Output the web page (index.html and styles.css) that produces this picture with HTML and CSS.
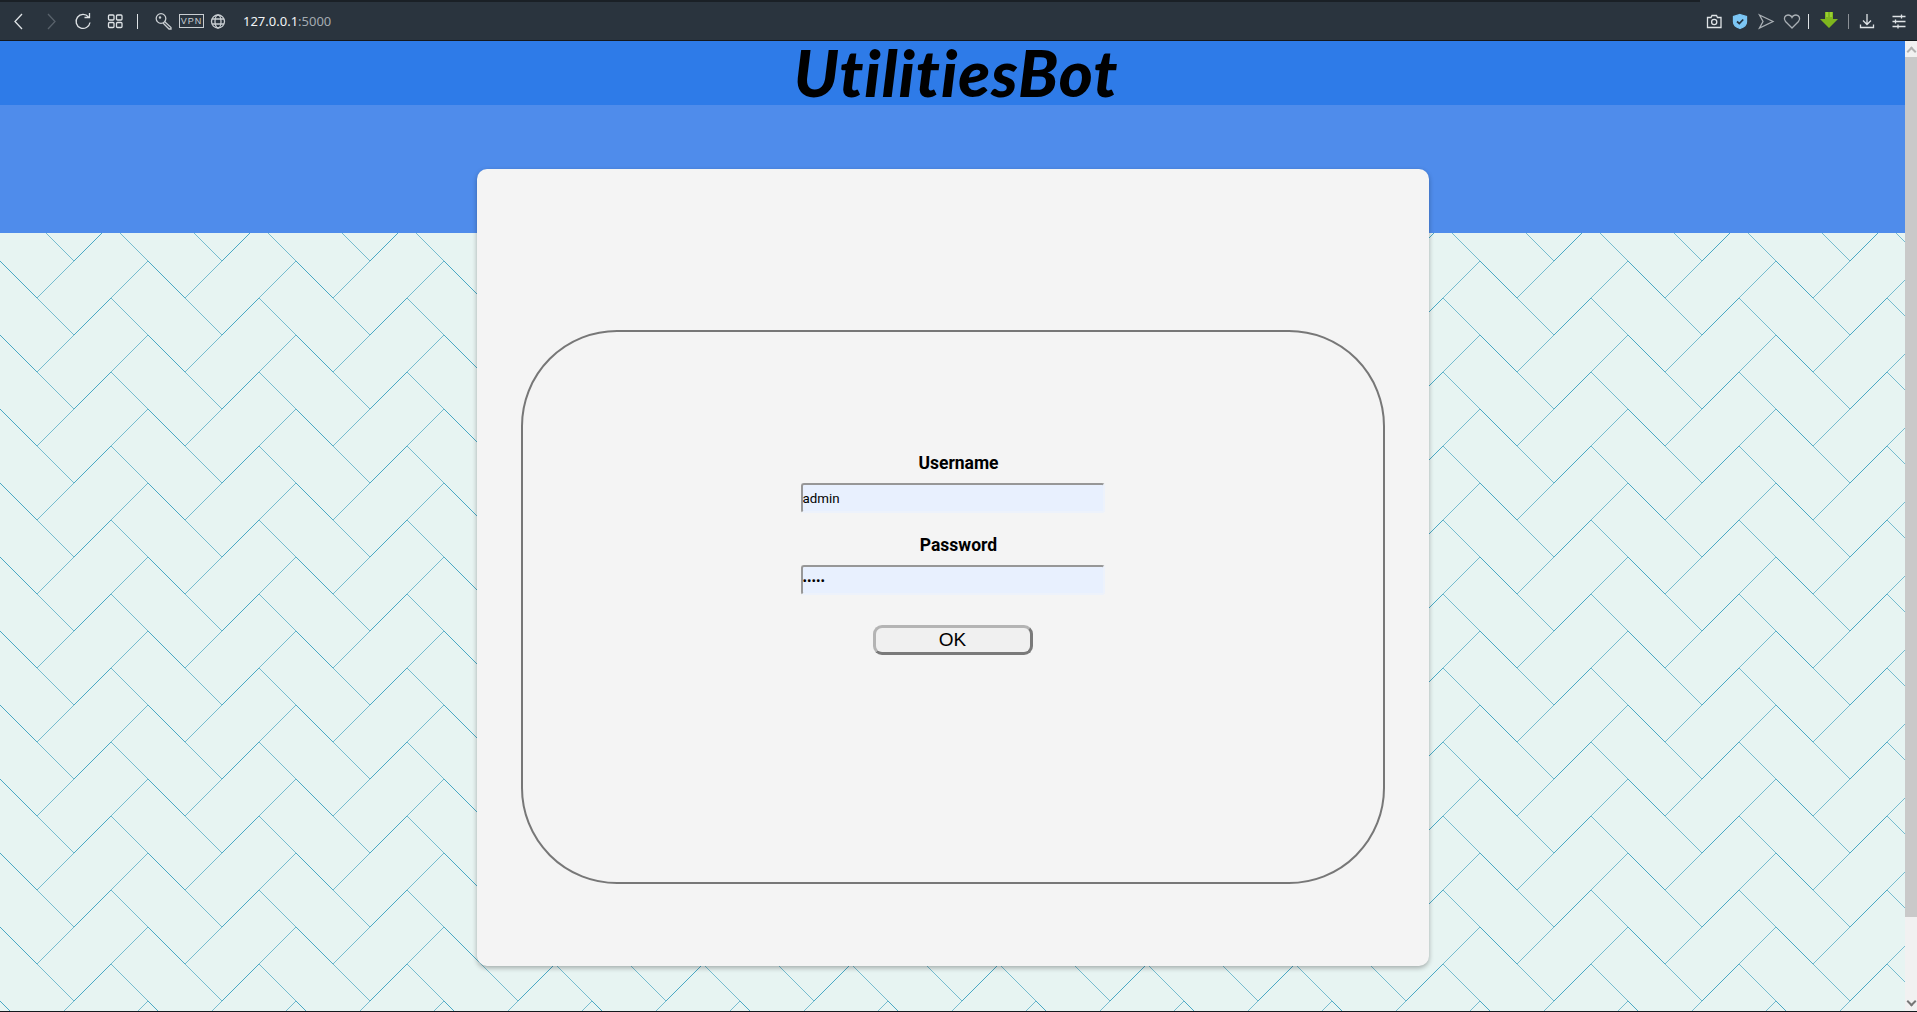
FILE: index.html
```html
<!DOCTYPE html>
<html>
<head>
    <title>UtilitiesBot</title>
    <link rel="stylesheet" href="styles.css">
</head>
<body>
    <div class="toolbar">
        <svg class="icon" viewBox="0 0 20 20"><path d="M13 3 L6 10.5 L13 18" /></svg>
        <svg class="icon dim" viewBox="0 0 20 20"><path d="M7 3 L14 10.5 L7 18" /></svg>
        <svg class="icon" viewBox="0 0 20 20"><path d="M15.5 6 A7 7 0 1 0 17 11.5" /><path d="M11.5 6.5 L16.5 6.5 L16.5 2" /></svg>
        <svg class="icon" viewBox="0 0 20 20"><rect x="3.5" y="4" width="5.5" height="5" rx="1" /><rect x="11.5" y="4" width="5.5" height="5" rx="1" /><rect x="3.5" y="11.5" width="5.5" height="5" rx="1" /><rect x="11.5" y="11.5" width="5.5" height="5" rx="1" /></svg>
        <span class="sep"></span>
        <svg class="icon key" viewBox="0 0 20 20"><circle cx="7" cy="7.5" r="4.8" /><path d="M10.5 10.5 L17 16.5 L17 18 L15 18 L9 12" /><circle cx="6" cy="6.5" r=".6" /></svg>
        <span class="vpn">VPN</span>
        <svg class="icon globe" viewBox="0 0 20 20"><circle cx="10" cy="10.5" r="6.5" /><ellipse cx="10" cy="10.5" rx="3" ry="6.5" /><path d="M4 8 H16 M4 13 H16" /></svg>
        <span class="address">127.0.0.1<span class="port">:5000</span></span>

        <div class="toolbar-right">
            <svg class="icon" viewBox="0 0 20 20"><path d="M3.5 6.5 H7 L8 4.5 H12.5 L13.5 6.5 H17 V16.5 H3.5 Z" /><circle cx="10.2" cy="11" r="2.6" /></svg>
            <svg class="icon" viewBox="0 0 20 20"><path class="shield" d="M10 3.5 L16.5 5.5 V11 C16.5 14.5 13 16.5 10 17.5 C7 16.5 3.5 14.5 3.5 11 V5.5 Z" /><path class="check" d="M7 10.5 L9.3 12.5 L13.2 8.5" /></svg>
            <svg class="icon grey" viewBox="0 0 20 20"><path d="M3.5 4 L17 10.5 L3.5 17 L7 10.5 Z" /></svg>
            <svg class="icon grey" viewBox="0 0 20 20"><path d="M10 17 L3.5 10.5 C1 7.5 3 4 6 4 C8 4 9.3 5 10 6.5 C10.7 5 12 4 14 4 C17 4 19 7.5 16.5 10.5 Z" /></svg>
            <span class="sep"></span>
            <svg class="icon green" viewBox="0 0 20 20"><path class="arrow" d="M6 1 H14 V8 H19 L10 17 L1 8 H6 Z" /><path class="arrow-mark" d="M8 1 V6 M12 1 V6" /></svg>
            <span class="sep sep-dim"></span>
            <svg class="icon" viewBox="0 0 20 20"><path d="M10 3 V13 M6 9.5 L10 13.5 L14 9.5" /><path d="M3.5 13.5 V16.5 H16.5 V13.5" /></svg>
            <svg class="icon" viewBox="0 0 20 20"><path d="M3.5 5.5 H16.5 M3.5 10.5 H16.5 M3.5 15.5 H16.5" /><path d="M12.5 3.5 V7.5 M6.5 8.5 V12.5 M9 13.5 V17.5" /></svg>
        </div>
    </div>

    <div class="viewport">
        <div class="page">
            <div class="top-bar">
                <h1 class="logo">UtilitiesBot</h1>
            </div>
            <div class="band"></div>

            <div class="card">
                <div class="login-box">
                    <form class="login-form">
                        <label for="username">Username</label>
                        <input type="text" id="username" value="admin">

                        <label for="password">Password</label>
                        <input type="password" id="password" value="admin">

                        <button type="button" class="ok-button">OK</button>
                    </form>
                </div>
            </div>
        </div>

        <div class="scrollbar">
            <span class="scroll-arrow up"></span>
            <span class="scroll-thumb"></span>
            <span class="scroll-arrow down"></span>
        </div>
    </div>
</body>
</html>
```

FILE: styles.css
```css
html, body {
    height: 100%;
}

body {
    font-family: 'Roboto', sans-serif;
    margin: 0;
    height: 1012px;
    overflow: hidden;
    display: flex;
    flex-direction: column;
    background-color: #14181d;
}

/* browser toolbar */
.toolbar {
    height: 38px;
    flex-shrink: 0;
    display: flex;
    align-items: center;
    padding: 2px 8px 0 9px;
    background: linear-gradient(90deg, #1a2026 1700px, transparent 1700px) no-repeat 0 0 / 100% 2px, #2a343e;
    border-bottom: 1px solid #14181d;
    color: #fff;
}

.icon {
    width: 20px;
    height: 20px;
    flex-shrink: 0;
    margin-right: 12px;
    fill: none;
    stroke: #dfe3e6;
    stroke-width: 1.3;
}

.dim {
    stroke: #59626b;
}

.grey {
    stroke: #aab0b5;
}

.key {
    margin-left: 7px;
    margin-right: 5px;
    stroke: #c9ced2;
}

.globe {
    margin-left: 4px;
    margin-right: 15px;
    stroke: #c9ced2;
}

.sep {
    width: 1px;
    height: 15px;
    flex-shrink: 0;
    margin-left: 0;
    margin-right: 9px;
    background-color: #dfe3e6;
}

.sep-dim {
    background-color: #8b9197;
}

.vpn {
    width: 23px;
    height: 12px;
    border: 1px solid #c9ced2;
    font-family: 'Liberation Sans', sans-serif;
    font-size: 9px;
    line-height: 12px;
    letter-spacing: 1px;
    text-align: center;
    color: #c9ced2;
}

.address {
    font-family: 'Noto Sans', sans-serif;
    font-size: 13px;
    color: #f2f4f5;
}

.port {
    color: #a4abb1;
}

.toolbar-right {
    margin-left: auto;
    display: flex;
    align-items: center;
}

.toolbar-right .icon {
    margin-right: 6px;
}

.toolbar-right .icon:last-child {
    margin-right: 0;
}

.toolbar-right .sep {
    margin-left: 0;
    margin-right: 10px;
}

.toolbar-right .green {
    margin-right: 9px;
}

.toolbar-right .sep-dim {
    margin-right: 8px;
}

.toolbar-right .sep-dim + .icon {
    margin-right: 12px;
}

.shield {
    fill: #7cc6f5;
    stroke: #7cc6f5;
}

.check {
    stroke: #24323f;
    stroke-width: 1.7;
}

.arrow {
    fill: #7fb61e;
    stroke: none;
}

.arrow-mark {
    stroke: #a9dc3c;
}

/* page area */
.viewport {
    height: 970px;
    flex-shrink: 0;
    display: flex;
}

.page {
    flex: 1;
    min-width: 0;
    background-color: #e7f4f2;
    background-image: url("data:image/svg+xml,%3Csvg xmlns='http://www.w3.org/2000/svg' width='148' height='74' shape-rendering='crispEdges' fill='none'%3E%3Cpath stroke='%2376bccf' d='M111 37L148 74M37 37L74 74M37 37L74 0M111 37L148 0'/%3E%3Cpath stroke='%234aa8c4' d='M0 0L37 37M74 74L111 37'/%3E%3C/svg%3E");
    background-position: 0 -2px;
}

.top-bar {
    height: 64px;
    background-color: #2e7be8;
    text-align: center;
}

.logo {
    margin: 0;
    padding-left: 7px;
    font-family: 'Lato', sans-serif;
    font-style: italic;
    font-weight: 900;
    font-size: 65px;
    line-height: 62px;
    letter-spacing: 1px;
    color: #000;
}

.band {
    height: 128px;
    background-color: #4f8ceb;
}

.card {
    width: 952px;
    height: 797px;
    box-sizing: border-box;
    margin: -64px auto 0;
    padding: 161px 44px 0;
    background-color: #f4f4f4;
    border-radius: 10px;
    box-shadow: 0 2px 5px rgba(0, 0, 0, 0.3);
}

.login-box {
    height: 554px;
    box-sizing: border-box;
    padding-top: 121px;
    border: 2px solid #777;
    border-radius: 96px;
}

.login-form {
    width: 304px;
    margin: 0 auto;
    display: flex;
    flex-direction: column;
    align-items: center;
}

label {
    display: block;
    font-weight: bold;
    font-size: 17.5px;
    line-height: 20px;
    margin-bottom: 10px;
    padding-left: 12px;
    color: #000;
}

input[type="text"],
input[type="password"] {
    width: 304px;
    height: 30px;
    box-sizing: border-box;
    margin-bottom: 22px;
    padding: 0;
    border: 2px solid;
    border-color: #979797 #edf2fb #edf2fb #979797;
    border-radius: 3px;
    background-color: #e8f0fe;
    font-family: 'Roboto', sans-serif;
    font-size: 13.33px;
    color: #000;
}

.ok-button {
    width: 160px;
    height: 30px;
    margin-top: 8px;
    padding: 0;
    border: 3px solid;
    border-color: #b4b4b4 #7a7a7a #7a7a7a #b4b4b4;
    border-radius: 9px;
    background-color: #f0f0f0;
    font-family: 'Liberation Sans', sans-serif;
    font-size: 19px;
    color: #000;
}

/* scrollbar */
.scrollbar {
    width: 12px;
    flex-shrink: 0;
    display: flex;
    flex-direction: column;
    background-color: #f1f1f1;
}

.scroll-thumb {
    height: 860px;
    background-color: #c9c9c9;
}

.scroll-arrow {
    height: 16px;
    flex-shrink: 0;
    display: flex;
    justify-content: center;
    align-items: center;
}

.scroll-arrow.down {
    margin-top: auto;
}

.scroll-arrow::before {
    content: "";
    width: 5px;
    height: 5px;
    border-left: 2px solid #777;
    border-top: 2px solid #777;
    transform: translateY(2px) rotate(45deg);
}

.scroll-arrow.up::before {
    border-color: #b0b0b0;
}

.scroll-arrow.down::before {
    transform: translateY(-2px) rotate(225deg);
}
```
